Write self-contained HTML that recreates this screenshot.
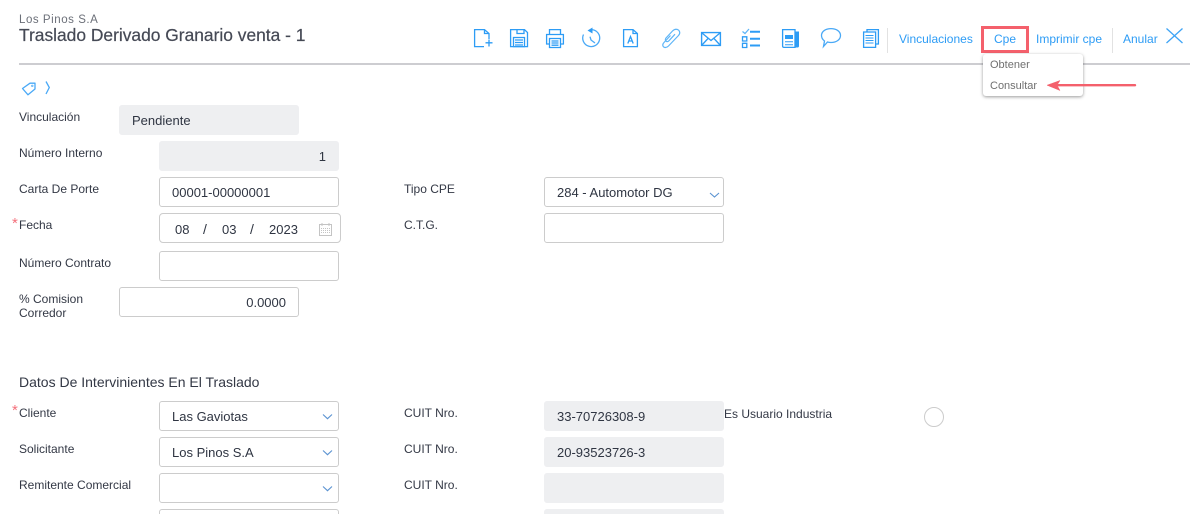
<!DOCTYPE html>
<html lang="es"><head><meta charset="utf-8"><title>Traslado</title>
<style>
html,body{margin:0;padding:0;background:#fff;width:1190px;height:514px;overflow:hidden}
body{font-family:"Liberation Sans",sans-serif;position:relative;color:#3a3f4c}
.a{position:absolute;white-space:nowrap}
.l{position:absolute;font-size:12px;line-height:14px;color:#333845;white-space:nowrap}
.f{position:absolute;box-sizing:border-box;height:30px;border:1px solid #ccc;border-radius:3px;background:#fff;font-size:13px;line-height:30px;padding:0 12px;color:#2f3542;white-space:nowrap}
.g{background:#eeeff1;border-color:#eeeff1}
.r{text-align:right}
.s{position:absolute;color:#f4707b;font-size:15px;line-height:15px}
.t{position:absolute;font-size:12px;line-height:14px;color:#2d9cf5;white-space:nowrap}
svg{position:absolute;left:0;top:0}
</style></head><body>
<div class="a" style="left:19px;top:14px;font-size:11.5px;line-height:13px;color:#6b6f78;letter-spacing:.55px">Los Pinos S.A</div>
<div class="a" style="left:19px;top:24px;font-size:17.4px;line-height:22px;color:#454955;-webkit-text-stroke:.2px #454955">Traslado Derivado Granario venta - 1</div>
<div class="a" style="left:19px;top:63px;width:1171px;height:2px;background:#cdcdd1"></div>
<div class="a" style="left:887px;top:28px;width:1px;height:25px;background:#e2e2e2"></div>
<div class="a" style="left:1112px;top:28px;width:1px;height:25px;background:#e2e2e2"></div>
<div class="t" style="left:899px;top:32px">Vinculaciones</div>
<div class="t" style="left:1036px;top:32px">Imprimir cpe</div>
<div class="t" style="left:1123px;top:32px">Anular</div>
<div class="a" style="left:981px;top:26px;width:48px;height:27px;box-sizing:border-box;border:3px solid #f4606c;font-size:12px;line-height:21px;text-align:center;color:#2d9cf5">Cpe</div>
<div class="a" style="left:983px;top:54px;width:100px;height:42px;background:#fff;border-radius:3px;box-shadow:0 1px 3px rgba(0,0,0,.4)"></div>
<div class="a" style="left:990px;top:58px;font-size:11px;line-height:14px;color:#707070">Obtener</div>
<div class="a" style="left:990px;top:79px;font-size:11px;line-height:14px;color:#707070">Consultar</div>

<svg width="1190" height="514" viewBox="0 0 1190 514" fill="none" stroke="#2d9cf5" stroke-width="1.3">
<!-- new doc -->
<path d="M489 39V33.500L484.500 29.600H474.600V46.600H484"/><path d="M484.500 29.600V33.500H489"/><path d="M485.500 42.800H492.500M489 39.500V46.500"/>
<!-- save -->
<path d="M510.600 29.600H524.500L527.500 32.500V46.600H510.600Z"/><path d="M517 29.600V33.500H524V29.600"/><path d="M513.500 37.500H524.500V46.600H513.500Z"/><path d="M515 40H523M515 42.500H523M515 45H523"/>
<!-- printer -->
<path d="M549.500 34V29.600H560.500V34"/><path d="M549 44H546.600V34.500H563.400V44H561"/><path d="M549.500 38.500H560.500V47.500H549.500Z"/><path d="M551.500 41H558.500M551.500 43H558.500M551.500 45.200H558.500"/>
<!-- undo clock -->
<path d="M592 29.600A8.500 8.500 0 1 1 583.500 34.500" stroke="#4aa9f6"/><path d="M592.500 27.500V33.500L587.500 30.500Z" fill="#2d9cf5" stroke="none"/><path d="M590 36.700L591 40L595 43" stroke="#4aa9f6"/>
<!-- A doc -->
<path d="M633 29.600H623.600V46.600H637.400V33.500Z"/><path d="M633 29.600V33.500H637.400"/><path d="M627.800 43.500L630.500 36.500L633.200 43.500M628.800 41H632.200"/>
<!-- clip -->
<path d="M670.500 35.500L664 42.500C662 44.500 662.500 47 665 47.500C666.500 47.700 667.500 47 668.500 46L678.500 35.500C680.500 33.500 680 30.500 677.500 29.500C675.500 28.800 674 29.500 672.500 31L666 38C665 39.200 665.200 40.500 666 41.200C667 42 668 41.700 669 40.700L675 34.200" stroke="#5eb5f7" stroke-width="1.200"/>
<!-- envelope -->
<path d="M701.600 32.600H720.400V45.400H701.600Z" stroke-width="1.400"/><path d="M702 33L711 40.500L720 33M702 45L708 38.500M720 45L714 38.500"/>
<!-- checklist -->
<path d="M742.500 31.500L745 33.500L749 29" stroke="#5eb5f7"/><path d="M742.500 36.800H746.800V41H742.500ZM742.500 43.300H746.800V47.500H742.500Z"/><path d="M750 31.700H760M750 38.700H760M750 45.500H760" stroke-width="2"/>
<!-- news -->
<path d="M782.600 29.600H795V47.400H784C783 47.400 782.600 47 782.600 46Z"/><path d="M795 31.500H799V46C799 47 798.500 47.500 797.500 47.500H795Z" fill="#2d9cf5" stroke="none"/><rect x="785" y="35" width="8" height="4" fill="#2d9cf5" stroke="none"/><path d="M785 41.800H793M785 44.800H793" stroke-width="1"/>
<!-- chat -->
<path d="M831 28.600C836.500 28.600 840.500 31.500 840.500 35.500C840.500 39.500 836.500 42.500 831 42.500C830 42.500 828.500 42.300 827.500 42L823.500 46.500L824.500 41C822.500 39.500 821.500 37.500 821.500 35.500C821.500 31.500 825.500 28.600 831 28.600Z" stroke="#4aa9f6"/>
<!-- copy -->
<path d="M867 31.800V29.600H878.400V44H875.600"/><path d="M863.600 32H875.600V47.400H863.600Z"/><path d="M865.500 35.500H873.500M865.500 38H873.500M865.500 40.500H873.500M865.500 43H873.500" stroke-width="1"/>
<!-- X -->
<path d="M1166.500 28.500L1182.500 43M1182.500 28.500L1166.500 43" stroke="#3ea4f6"/>
<!-- arrow -->
<path d="M1055 85.200H1135" stroke="#f4606c" stroke-width="2.400" stroke-linecap="round"/><path d="M1047 85.200L1060 80.500L1057 85.200L1060 90.500Z" fill="#f4606c" stroke="#f4606c" stroke-width=".5" stroke-linejoin="round"/>
<!-- tag -->
<path d="M22.500 88.500L30 83.200H35V89L28 94.800Z" stroke="#4aa9f6" stroke-linejoin="round"/><circle cx="32.300" cy="85.900" r=".8" stroke="#4aa9f6" stroke-width=".7"/>
<path d="M46 81.500L49.300 87.500L46 94" stroke="#4aa9f6"/>
</svg>

<div class="l" style="left:19px;top:110px">Vinculación</div>
<div class="f g" style="left:119px;top:105px;width:180px">Pendiente</div>
<div class="l" style="left:19px;top:146px">Número Interno</div>
<div class="f g r" style="left:159px;top:141px;width:180px">1</div>
<div class="l" style="left:19px;top:182px">Carta De Porte</div>
<div class="f" style="left:159px;top:177px;width:180px">00001-00000001</div>
<div class="s" style="left:12px;top:216px">*</div>
<div class="l" style="left:19px;top:218px">Fecha</div>
<div class="f" style="left:159px;top:213px;width:182px;border-radius:4px"></div>
<div class="a" style="left:175px;top:215px;font-size:13px;line-height:30px;color:#2f3542">08</div>
<div class="a" style="left:203px;top:215px;font-size:14px;line-height:28px;color:#2f3542">/</div>
<div class="a" style="left:222px;top:215px;font-size:13px;line-height:30px;color:#2f3542">03</div>
<div class="a" style="left:250px;top:215px;font-size:14px;line-height:28px;color:#2f3542">/</div>
<div class="a" style="left:269px;top:215px;font-size:13px;line-height:30px;color:#2f3542">2023</div>
<svg width="1190" height="514" viewBox="0 0 1190 514" fill="none" stroke="#c4c4c4" stroke-width="1">
<path d="M319.500 224.500H331.500V235.500H319.500Z"/><path d="M322 223V226M329 223V226"/><path d="M321 228.500H330M321 230.500H330M321 232.500H330" stroke-dasharray="1 1"/>
</svg>
<div class="l" style="left:19px;top:256px">Número Contrato</div>
<div class="f" style="left:159px;top:251px;width:180px"></div>
<div class="l" style="left:19px;top:292px">% Comision<br>Corredor</div>
<div class="f r" style="left:119px;top:287px;width:180px">0.0000</div>
<div class="l" style="left:404px;top:182px">Tipo CPE</div>
<div class="f" style="left:544px;top:177px;width:180px">284 - Automotor DG</div>
<div class="l" style="left:404px;top:218px">C.T.G.</div>
<div class="f" style="left:544px;top:213px;width:180px"></div>
<div class="a" style="left:19px;top:374px;font-size:14px;line-height:16px;color:#333845">Datos De Intervinientes En El Traslado</div>
<div class="s" style="left:12px;top:403px">*</div>
<div class="l" style="left:19px;top:406px">Cliente</div>
<div class="f" style="left:159px;top:401px;width:180px">Las Gaviotas</div>
<div class="l" style="left:19px;top:442px">Solicitante</div>
<div class="f" style="left:159px;top:437px;width:180px">Los Pinos S.A</div>
<div class="l" style="left:19px;top:478px">Remitente Comercial</div>
<div class="f" style="left:159px;top:473px;width:180px"></div>
<div class="f" style="left:159px;top:509px;width:180px"></div>
<div class="l" style="left:404px;top:406px">CUIT Nro.</div>
<div class="f g" style="left:544px;top:401px;width:180px">33-70726308-9</div>
<div class="l" style="left:404px;top:442px">CUIT Nro.</div>
<div class="f g" style="left:544px;top:437px;width:180px">20-93523726-3</div>
<div class="l" style="left:404px;top:478px">CUIT Nro.</div>
<div class="f g" style="left:544px;top:473px;width:180px"></div>
<div class="f g" style="left:544px;top:509px;width:180px"></div>
<div class="l" style="left:724px;top:407px">Es Usuario Industria</div>
<div class="a" style="left:924px;top:407px;width:20px;height:20px;box-sizing:border-box;border:1px solid #ccc;border-radius:50%"></div>
<svg width="1190" height="514" viewBox="0 0 1190 514" fill="none" stroke="#5b93d1" stroke-width="1.100">
<path d="M710 193L714.500 197L719 193M323 414.500L327.500 418.700L332 414.500M323 450.500L327.500 454.700L332 450.500M323 486.500L327.500 490.700L332 486.500"/>
</svg>
</body></html>
